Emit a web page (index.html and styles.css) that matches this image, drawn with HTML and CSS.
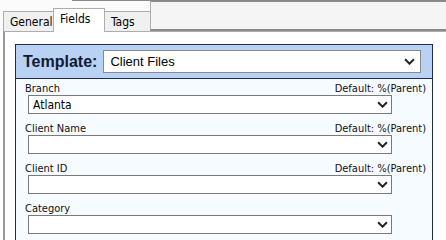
FILE: index.html
```html
<!DOCTYPE html>
<html>
<head>
<meta charset="utf-8">
<link rel="stylesheet" href="styles.css">
</head>
<body>
<div class="top">
  <div class="tabs">
    <div class="tab">General</div>
    <div class="tab active">Fields</div>
    <div class="tab">Tags</div>
  </div>
  <div class="filler"></div>
</div>
<div class="panel">
  <div class="group">
    <div class="head">
      <span class="tlabel">Template:</span>
      <div class="select big"><span>Client Files</span><svg class="chev" viewBox="0 0 10 6"><path d="M1 1 L5 5 L9 1" /></svg></div>
    </div>
    <div class="body">
      <div class="field">
        <div class="lrow"><span>Branch</span><span>Default: %(Parent)</span></div>
        <div class="select"><span>Atlanta</span><svg class="chev" viewBox="0 0 10 6"><path d="M1 1 L5 5 L9 1" /></svg></div>
      </div>
      <div class="field">
        <div class="lrow"><span>Client Name</span><span>Default: %(Parent)</span></div>
        <div class="select"><span></span><svg class="chev" viewBox="0 0 10 6"><path d="M1 1 L5 5 L9 1" /></svg></div>
      </div>
      <div class="field">
        <div class="lrow"><span>Client ID</span><span>Default: %(Parent)</span></div>
        <div class="select"><span></span><svg class="chev" viewBox="0 0 10 6"><path d="M1 1 L5 5 L9 1" /></svg></div>
      </div>
      <div class="field">
        <div class="lrow"><span>Category</span><span></span></div>
        <div class="select"><span></span><svg class="chev" viewBox="0 0 10 6"><path d="M1 1 L5 5 L9 1" /></svg></div>
      </div>
      <div class="field">
        <div class="lrow"><span>Sub Date</span><span></span></div>
      </div>
    </div>
  </div>
</div>
</body>
</html>
```
FILE: styles.css
```css
html, body {
  margin: 0;
  padding: 0;
  background: #ffffff;
  overflow: hidden;
  width: 446px;
  height: 240px;
}
body {
  font-family: "DejaVu Sans", sans-serif;
  font-stretch: condensed;
  font-size: 11px;
  color: #000;
}
.top {
  display: flex;
  align-items: flex-end;
  height: 31px;
  background: #fbfbfb;
  background-image: linear-gradient(#8a8a8a, #8a8a8a);
  background-repeat: no-repeat;
  background-size: 100% 1px;
  background-position: 72px 0;
}
.tabs {
  display: flex;
  align-items: flex-end;
  padding-left: 3px;
  height: 31px;
}
.tab {
  box-sizing: border-box;
  height: 20px;
  padding: 3px 6px 0 6px;
  border: 1px solid #adadad;
  border-bottom: none;
  background: #f0f0f0;
  font-size: 12px;
  margin-right: -1px;
}
.tab:first-child { width: 51px; }
.tab:nth-child(3) { width: 47px; }
.tab.active {
  height: 24px;
  width: 52px;
  background: #ffffff;
  position: relative;
  z-index: 2;
  margin-bottom: -1px;
  padding-top: 3px;
}
.filler {
  flex: 1;
  align-self: stretch;
  background: #f5f5f5;
  border-top: 2px solid #8a8a8a;
  border-left: 1px solid #adadad;
  border-bottom: 2px solid #8a8a8a;
  box-sizing: border-box;
}
.panel {
  margin-left: 3px;
  border-left: 2px solid #9a9a9a;
  border-top: 1px solid #adadad;
  background: #ffffff;
  padding: 12px 0 0 10px;
  height: 240px;
  box-sizing: border-box;
  width: 460px;
}
.group {
  width: 416px;
  border: 1px solid #1c2a55;
  background: #f6fbff;
}
.head {
  display: flex;
  align-items: center;
  gap: 6px;
  background: #b9d1f3;
  height: 33px;
  padding: 0 11px 0 7px;
  border-bottom: 1px solid #1c2a55;
}
.tlabel {
  font-family: "Liberation Sans", sans-serif;
  font-weight: bold;
  font-size: 16px;
  color: #101a33;
}
.select {
  display: flex;
  align-items: center;
  justify-content: space-between;
  box-sizing: border-box;
  border: 1px solid #7a7a7a;
  background: #fff;
  height: 19px;
  padding: 0 3px 0 4px;
  margin-left: 3px;
  width: 364px;
  font-size: 12px;
}
.select.big {
  flex: 1;
  height: 23px;
  margin-left: 0;
  font-family: "Liberation Sans", sans-serif;
  font-size: 13px;
  padding: 0 5px 0 6px;
  border-color: #8a8a8a;
}
.chev {
  width: 11px;
  height: 7px;
  fill: none;
  stroke: #222;
  stroke-width: 1.8;
}
.body {
  padding: 4px 6px 0 9px;
  height: 200px;
}
.field {
  display: flex;
  flex-direction: column;
  margin-bottom: 9px;
}
.lrow {
  display: flex;
  justify-content: space-between;
  height: 12px;
  line-height: 12px;
  color: #111;
}
```
